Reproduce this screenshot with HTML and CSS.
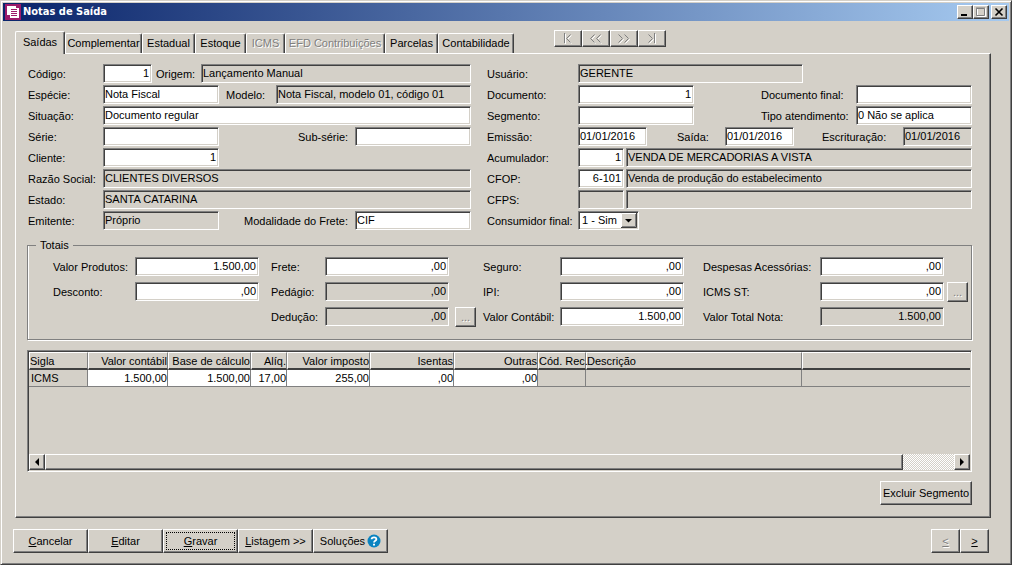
FILE: index.html
```html
<!DOCTYPE html>
<html lang="pt-BR">
<head>
<meta charset="utf-8">
<title>Notas de Saída</title>
<link rel="stylesheet" href="styles.css">
</head>
<body>
<main class="window">
  <header class="titlebar">
    <svg class="app-icon" width="16" height="16" viewBox="0 0 16 16" aria-hidden="true"><path fill="#9b1b6a" d="M0 0h16v16H0z"/><path fill="#fff" d="M2 2h9v2h3v10H5v-3H2z"/><path stroke="#9b1b6a" d="M6 5.500h6M6 7.500h6M6 9.500h6M6 11.500h6"/></svg>
    <h1 class="title">Notas de Saída</h1>
    <button class="raised win-btn" type="button" aria-label="Minimizar"><svg width="12" height="10" viewBox="0 0 12 10"><path d="M2 7h6v2H2z"/></svg></button>
    <button class="raised win-btn" type="button" aria-label="Maximizar" disabled><svg width="12" height="10" viewBox="0 0 12 10"><path fill="none" stroke="#fff" d="M2.500 1.500h8v8h-8z"/><path fill="none" stroke="#808080" d="M1.500 1.500h8v7h-8zM1 1h9"/></svg></button>
    <button class="raised win-btn win-close" type="button" aria-label="Fechar"><svg width="12" height="10" viewBox="0 0 12 10"><path fill="none" stroke="#000" stroke-width="1.600" d="M2.500 1.500l7 7M9.500 1.500l-7 7"/></svg></button>
  </header>

  <div class="body">
    <div class="top">
      <nav class="tabs" role="tablist">
        <button class="tab tab-active" role="tab" aria-selected="true">Saídas</button>
        <button class="tab tab-complementar" role="tab">Complementar</button>
        <button class="tab tab-estadual" role="tab">Estadual</button>
        <button class="tab tab-estoque" role="tab">Estoque</button>
        <button class="tab tab-icms" role="tab" disabled>ICMS</button>
        <button class="tab tab-efd" role="tab" disabled>EFD Contribuições</button>
        <button class="tab tab-parcelas" role="tab">Parcelas</button>
        <button class="tab tab-contab" role="tab">Contabilidade</button>
      </nav>
      <div class="records">
        <button class="raised rec" type="button" aria-label="Primeiro" disabled><svg width="12" height="11" viewBox="0 0 12 11"><path class="lit" d="M3.500 1v10M9.500 2.500l-4 4 4 4"/><path class="dim" d="M2.500 0v10M8.500 1.500l-4 4 4 4"/></svg></button>
        <button class="raised rec" type="button" aria-label="Anterior" disabled><svg width="12" height="11" viewBox="0 0 12 11"><path class="lit" d="M5.500 2.500l-4 4 4 4M11.500 2.500l-4 4 4 4"/><path class="dim" d="M4.500 1.500l-4 4 4 4M10.500 1.500l-4 4 4 4"/></svg></button>
        <button class="raised rec" type="button" aria-label="Próximo" disabled><svg width="12" height="11" viewBox="0 0 12 11"><path class="lit" d="M1.500 2.500l4 4-4 4M7.500 2.500l4 4-4 4"/><path class="dim" d="M.5 1.500l4 4-4 4M6.500 1.500l4 4-4 4"/></svg></button>
        <button class="raised rec" type="button" aria-label="Último" disabled><svg width="12" height="11" viewBox="0 0 12 11"><path class="lit" d="M9.500 1v10M3.500 2.500l4 4-4 4"/><path class="dim" d="M8.500 0v10M2.500 1.500l4 4-4 4"/></svg></button>
      </div>
    </div>

    <section class="panel">
      <div class="form">
        <div class="col col-left">
          <div class="row"><label class="lead" for="codigo">Código:</label><input class="field num w-code" id="codigo" value="1"><label class="l-origem" for="origem">Origem:</label><input class="field grow" id="origem" value="Lançamento Manual" readonly></div>
          <div class="row"><label class="lead" for="especie">Espécie:</label><input class="field w-std" id="especie" value="Nota Fiscal"><label class="l-modelo" for="modelo">Modelo:</label><input class="field grow" id="modelo" value="Nota Fiscal, modelo 01, código 01" readonly></div>
          <div class="row"><label class="lead" for="situacao">Situação:</label><input class="field grow" id="situacao" value="Documento regular"></div>
          <div class="row"><label class="lead" for="serie">Série:</label><input class="field w-std" id="serie"><label class="push l-sub" for="subserie">Sub-série:</label><input class="field w-std" id="subserie"></div>
          <div class="row"><label class="lead" for="cliente">Cliente:</label><input class="field num w-std" id="cliente" value="1"></div>
          <div class="row"><label class="lead" for="razao">Razão Social:</label><input class="field grow" id="razao" value="CLIENTES DIVERSOS" readonly></div>
          <div class="row"><label class="lead" for="estado">Estado:</label><input class="field grow" id="estado" value="SANTA CATARINA" readonly></div>
          <div class="row"><label class="lead" for="emitente">Emitente:</label><input class="field w-std" id="emitente" value="Próprio" readonly><label class="push l-frete" for="modfrete">Modalidade do Frete:</label><input class="field w-std" id="modfrete" value="CIF"></div>
        </div>
        <div class="col col-right">
          <div class="row"><label class="lead" for="usuario">Usuário:</label><input class="field w-user" id="usuario" value="GERENTE" readonly></div>
          <div class="row"><label class="lead" for="documento">Documento:</label><input class="field num w-std" id="documento" value="1"><label class="push l-final" for="docfinal">Documento final:</label><input class="field w-std" id="docfinal"></div>
          <div class="row"><label class="lead" for="segmento">Segmento:</label><input class="field w-std" id="segmento"><label class="push l-final" for="tipo">Tipo atendimento:</label><input class="field w-std" id="tipo" value="0 Não se aplica"></div>
          <div class="row"><label class="lead" for="emissao">Emissão:</label><input class="field w-date" id="emissao" value="01/01/2016"><label class="l-saida" for="saida">Saída:</label><input class="field w-date" id="saida" value="01/01/2016"><label class="push l-escr" for="escr">Escrituração:</label><input class="field w-date" id="escr" value="01/01/2016" readonly></div>
          <div class="row pair"><label class="lead" for="acum">Acumulador:</label><input class="field num w-short" id="acum" value="1"><input class="field grow" aria-label="Descrição do acumulador" value="VENDA DE MERCADORIAS A VISTA" readonly></div>
          <div class="row pair"><label class="lead" for="cfop">CFOP:</label><input class="field num w-short" id="cfop" value="6-101"><input class="field grow" aria-label="Descrição do CFOP" value="Venda de produção do estabelecimento" readonly></div>
          <div class="row pair"><label class="lead" for="cfps">CFPS:</label><input class="field w-short" id="cfps" readonly><input class="field grow" aria-label="Descrição do CFPS" readonly></div>
          <div class="row"><label class="lead" for="consumidor">Consumidor final:</label><select class="field w-select" id="consumidor"><option>1 - Sim</option><option>0 - Não</option></select></div>
        </div>
      </div>

      <fieldset class="totals">
        <legend>Totais</legend>
        <div class="totals-grid">
          <label class="c1" for="t1">Valor Produtos:</label><input class="field num" id="t1" value="1.500,00">
          <label class="c2" for="t2">Frete:</label><input class="field num" id="t2" value=",00">
          <label class="c3" for="t3">Seguro:</label><input class="field num" id="t3" value=",00">
          <label class="c4" for="t4">Despesas Acessórias:</label><input class="field num" id="t4" value=",00">

          <label class="c1" for="t5">Desconto:</label><input class="field num" id="t5" value=",00">
          <label class="c2" for="t6">Pedágio:</label><input class="field num" id="t6" value=",00" readonly>
          <label class="c3" for="t7">IPI:</label><input class="field num" id="t7" value=",00">
          <label class="c4" for="t8">ICMS ST:</label><input class="field num" id="t8" value=",00">
          <button class="raised more more-last" type="button" disabled>...</button>

          <label class="c2" for="t9">Dedução:</label><input class="field num" id="t9" value=",00" readonly>
          <button class="raised more more-mid" type="button" disabled>...</button>
          <label class="c3" for="t10">Valor Contábil:</label><input class="field num" id="t10" value="1.500,00">
          <label class="c4" for="t11">Valor Total Nota:</label><input class="field num" id="t11" value="1.500,00" readonly>
        </div>
      </fieldset>

      <div class="gridbox">
        <table class="taxes">
          <colgroup><col class="k-sigla"><col class="k-contabil"><col class="k-valor"><col class="k-aliq"><col class="k-valor"><col class="k-outras"><col class="k-outras"><col class="k-cod"><col class="k-desc"><col></colgroup>
          <thead><tr><th>Sigla</th><th class="r">Valor contábil</th><th class="r">Base de cálculo</th><th class="r">Alíq.</th><th class="r">Valor imposto</th><th class="r">Isentas</th><th class="r">Outras</th><th>Cód. Rec.</th><th>Descrição</th><th></th></tr></thead>
          <tbody><tr><td>ICMS</td><td class="r edit">1.500,00</td><td class="r edit">1.500,00</td><td class="r edit">17,00</td><td class="r edit">255,00</td><td class="r edit">,00</td><td class="r edit">,00</td><td></td><td></td><td></td></tr></tbody>
        </table>
        <div class="scroll">
          <button class="raised arrow" type="button" aria-label="Rolar para a esquerda"><svg width="8" height="8" viewBox="0 0 8 8"><path d="M6 0v8L2 4z"/></svg></button>
          <div class="track"><div class="raised thumb"></div></div>
          <button class="raised arrow" type="button" aria-label="Rolar para a direita"><svg width="8" height="8" viewBox="0 0 8 8"><path d="M2 0v8l4-4z"/></svg></button>
        </div>
      </div>

      <button class="raised delete" type="button">Excluir Segmento</button>
    </section>

    <footer class="actions">
      <button class="raised act" type="button"><u>C</u>ancelar</button>
      <button class="raised act" type="button"><u>E</u>ditar</button>
      <button class="raised act act-focus" type="button"><u>G</u>ravar</button>
      <button class="raised act" type="button"><u>L</u>istagem &gt;&gt;</button>
      <button class="raised act" type="button">Soluções<svg class="help" width="14" height="14" viewBox="0 0 14 14" aria-hidden="true"><circle cx="7" cy="7" r="6.500" fill="#0a84c1"/><path fill="none" stroke="#fff" stroke-width="1.800" d="M4.600 5.300C4.700 2.700 9.400 2.700 9.400 5.200C9.400 6.800 7 6.800 7 8.600"/><path fill="#fff" d="M6 9.800h2v1.800H6z"/></svg></button>
      <div class="step">
        <button class="raised go" type="button" disabled><u>&lt;</u></button>
        <button class="raised go" type="button"><u>&gt;</u></button>
      </div>
    </footer>
  </div>
</main>
</body>
</html>
```

FILE: styles.css
```css
* { box-sizing: border-box; }

body {
  margin: 0;
  background: #d4d0c8;
  color: #000;
  font: 11px/14px "Liberation Sans", Arial, sans-serif;
}

button, input, select { font: inherit; color: inherit; margin: 0; border-radius: 0; }
button { white-space: nowrap; }

.window {
  display: flex;
  flex-direction: column;
  min-height: 100vh;
  padding: 2px;
  border: 1px solid;
  border-color: #d4d0c8 #404040 #404040 #d4d0c8;
  box-shadow: inset 1px 1px #fff, inset -1px -1px #808080;
}

.raised {
  padding: 0;
  background: #d4d0c8;
  border: 1px solid;
  border-color: #fff #404040 #404040 #fff;
  box-shadow: inset -1px -1px #808080;
}

button:disabled { color: #808080; text-shadow: 1px 1px #fff; }

.titlebar {
  display: flex;
  align-items: center;
  height: 18px;
  padding: 0 2px;
  background: linear-gradient(90deg, #0a246a, #a6caf0);
}
.app-icon { flex: none; }
.title {
  flex: 1;
  margin: 0 0 0 2px;
  color: #fff;
  font: bold 11px/16px "DejaVu Sans Condensed", "DejaVu Sans", sans-serif;
}
.win-btn { display: flex; width: 16px; height: 14px; padding: 1px; }
.win-close { margin-left: 2px; }

.body { flex: 1; display: flex; flex-direction: column; padding: 9px 18px 9px 10px; }

.top { display: flex; align-items: flex-start; margin-left: 2px; }
.tabs { display: flex; align-items: flex-end; height: 23px; }
.tab {
  height: 20px;
  padding: 0 0 1px;
  background: #d4d0c8;
  border: 1px solid;
  border-color: #fff #404040 transparent #fff;
  border-radius: 2px 2px 0 0;
  border-bottom: 0;
  box-shadow: inset -1px 0 #808080;
}
.tab-active { position: relative; width: 50px; height: 23px; margin-bottom: -1px; padding-bottom: 3px; }
.tab-complementar { width: 77px; }
.tab-estadual { width: 53px; }
.tab-estoque { width: 51px; }
.tab-icms { width: 39px; }
.tab-efd { width: 100px; }
.tab-parcelas { width: 53px; }
.tab-contab { width: 76px; }
.records { display: flex; margin-left: 40px; }
.rec { display: flex; align-items: center; justify-content: center; width: 28px; height: 17px; }
.lit, .dim { fill: none; stroke: #fff; }
.dim { stroke: #808080; }

.panel {
  flex: 1;
  display: flex;
  flex-direction: column;
  margin-left: 2px;
  padding: 10px 18px 12px 11px;
  border: 1px solid;
  border-color: #fff #404040 #404040 #fff;
  box-shadow: inset -1px -1px #808080;
}

.form { display: flex; gap: 16px; padding: 0 0 0 1px; }
.col { display: flex; flex-direction: column; gap: 2px; min-width: 0; }
.col-left { flex: 443; }
.col-right { flex: 485; }
.row { display: flex; height: 19px; }
label { padding-top: 3px; white-space: nowrap; }
.col-left .lead { width: 75px; }
.col-right .lead { width: 91px; }
.l-origem { width: 49px; padding-left: 4px; }
.l-modelo { width: 57px; padding-left: 7px; }
.push { margin-left: auto; }
.l-sub { width: 57px; }
.l-frete { width: 111px; }
.l-final { width: 95px; }
.l-saida { width: 78px; padding-left: 30px; }
.l-escr { width: 81px; }
.pair .w-short { margin-right: 2px; }

.field {
  min-width: 0;
  height: 19px;
  padding: 0 2px 1px 1px;
  background: #fff;
  border: 1px solid;
  border-color: #808080 #fff #fff #808080;
  box-shadow: inset 1px 1px #404040, inset -1px -1px #d4d0c8;
  outline: 0;
}
.field:read-only:not(select) { background: #d4d0c8; }
.num { text-align: right; }
.grow { flex: 1; }
.w-code { width: 49px; }
.w-short { width: 46px; }
.w-date { width: 69px; }
.w-std { width: 116px; }
.w-user { width: 225px; }
.w-select {
  width: 61px;
  padding-left: 3px;
  appearance: none;
  background: #fff url("data:image/svg+xml,%3Csvg xmlns='http://www.w3.org/2000/svg' width='16' height='15'%3E%3Cpath fill='%23d4d0c8' d='M0 0h16v15H0z'/%3E%3Cpath fill='none' stroke='%23404040' d='M15.500 0v14.500H0'/%3E%3Cpath fill='none' stroke='%23808080' d='M14.500 1v12.500H1'/%3E%3Cpath fill='none' stroke='%23fff' d='M.500 14V.500H15'/%3E%3Cpath d='M4 6h7L7.500 9.500z'/%3E%3C/svg%3E") right 1px top 1px no-repeat;
}

.totals {
  margin: 8px 0 0;
  padding: 5px 0 13px 25px;
  border: 1px solid #808080;
  box-shadow: 1px 1px #fff, inset 1px 0 #fff;
}
.totals legend { height: 14px; margin-left: -17px; padding: 0 4px; }
.totals-grid {
  display: grid;
  grid-template-columns: 82px 1fr 66px 1fr 34px 77px 1fr 136px 1fr 27px;
  grid-auto-rows: 19px;
  row-gap: 6px;
}
.totals-grid .field { width: 100%; }
.c1 { grid-column: 1; }
.c2 { grid-column: 3; padding-left: 12px; }
.c3 { grid-column: 6; }
.c4 { grid-column: 8; padding-left: 19px; }
.more { width: 21px; height: 20px; }
.more-mid { grid-column: 5; margin-left: 6px; }
.more-last { grid-column: 10; margin-left: 3px; }

.gridbox {
  flex: 1;
  display: flex;
  flex-direction: column;
  justify-content: space-between;
  margin-top: 10px;
  padding: 1px;
  border: 1px solid;
  border-color: #808080 #fff #fff #808080;
  box-shadow: inset 1px 1px #404040;
}
.taxes { width: 100%; table-layout: fixed; border-collapse: separate; border-spacing: 0; }
.k-sigla { width: 59px; }
.k-contabil { width: 80px; }
.k-valor { width: 83px; }
.k-aliq { width: 36px; }
.k-outras { width: 84px; }
.k-cod { width: 48px; }
.k-desc { width: 216px; }
.taxes th, .taxes td { padding: 0 0 0 1px; text-align: left; font-weight: normal; white-space: nowrap; border-right: 1px solid #808080; }
.taxes th { height: 18px; border-left: 1px solid #fff; border-top: 1px solid #fff; border-bottom: 2px solid #404040; padding-left: 0; }
.taxes td { height: 17px; border-bottom: 1px solid #808080; padding-left: 2px; }
.taxes th:last-child, .taxes td:last-child { border-right: 0; }
.taxes .r { text-align: right; }
.taxes .edit { background: #fff; }

.scroll { display: flex; height: 16px; }
.arrow { display: flex; align-items: center; justify-content: center; width: 16px; height: 16px; }
.track { flex: 1; display: flex; background: repeating-conic-gradient(#fff 0 25%, #d4d0c8 0 50%) 0 0 / 2px 2px; }
.thumb { width: 94.400%; }

.delete { align-self: flex-end; width: 92px; height: 24px; margin-top: 9px; }

.actions { display: flex; margin-top: 11px; }
.act { display: flex; align-items: center; justify-content: center; width: 75px; height: 24px; }
.act-focus { outline: 1px dotted #000; outline-offset: -4px; }
.help { margin-left: 2px; }
.step { display: flex; margin: 0 2px 0 auto; }
.go { width: 29px; height: 24px; }
```
